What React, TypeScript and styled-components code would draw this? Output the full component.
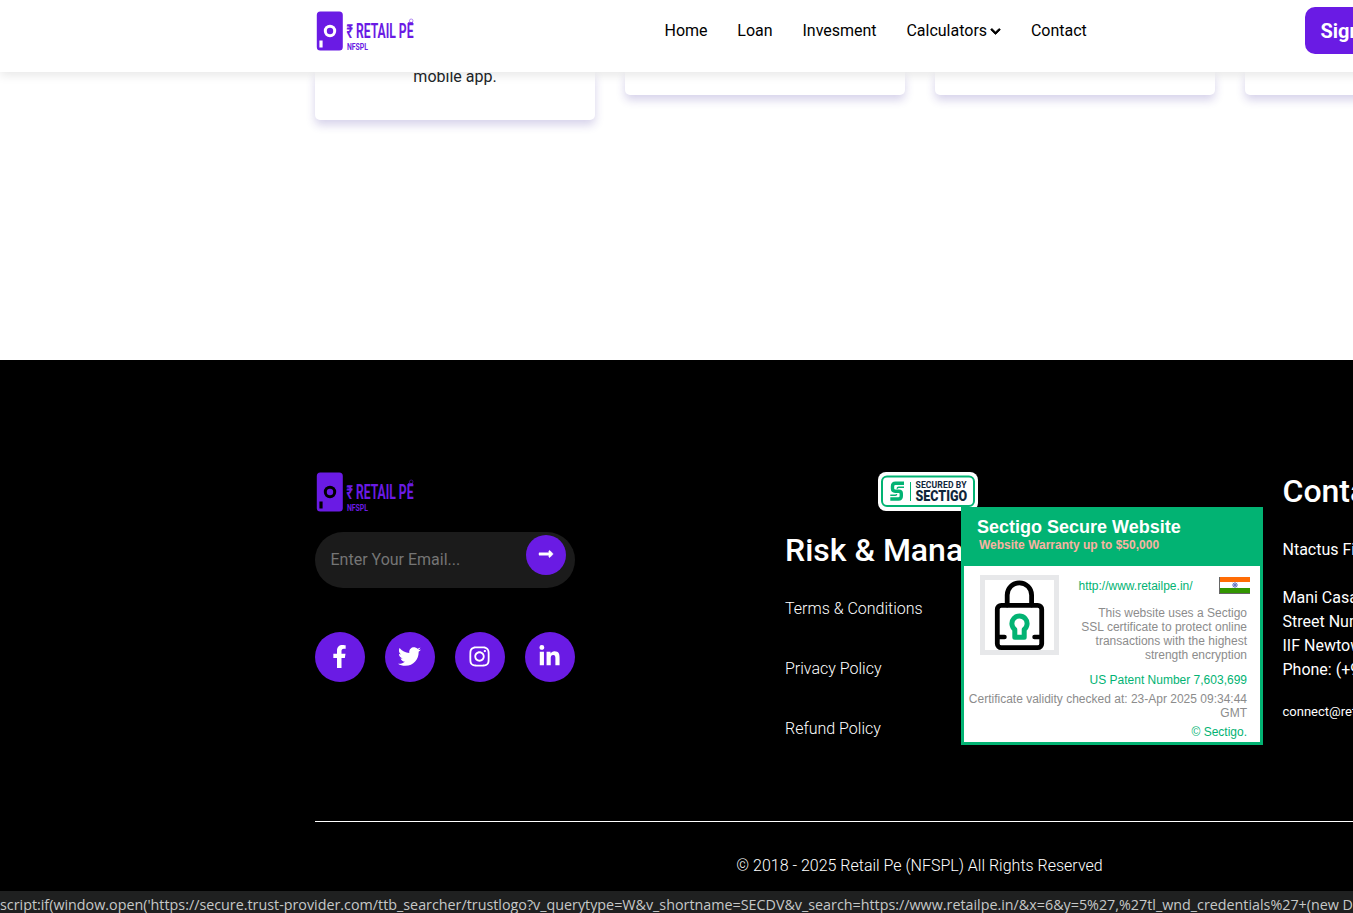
import React from "react";
import styled, { createGlobalStyle } from "styled-components";
import { FaFacebookF, FaTwitter, FaInstagram, FaLinkedinIn, FaChevronDown, FaLongArrowAltRight } from "react-icons/fa";

const purple = "#6a1be4";
const green = "#02b373";

const GlobalStyle = createGlobalStyle`
  * { box-sizing: border-box; }
  html, body { margin: 0; overflow: hidden; background: #fff; }
  body { font-family: Roboto, "Liberation Sans", sans-serif; font-size: 16px; line-height: 24px; color: #212529; }
  h3, p { margin: 0; }
  a { color: inherit; text-decoration: none; }
`;

const Viewport = styled.div`
  position: relative;
  width: 100%;
  height: 913px;
  overflow: hidden;
`;

const Page = styled.div`
  width: 1840px;
  display: flex;
  flex-direction: column;
`;

const Header = styled.header`
  position: relative;
  z-index: 2;
  height: 72px;
  padding: 0 315px;
  display: flex;
  align-items: flex-start;
  background: #fff;
  box-shadow: 0 3px 10px rgba(0, 0, 0, 0.1);
`;

const HeaderLogo = styled.a`
  flex: 0 0 349.5px;
  padding-top: 10px;
  line-height: 0;
`;

const Nav = styled.nav`
  flex: 0 0 640.5px;
  display: flex;
  gap: 29.8px;
  padding-top: 19px;
  color: #000;
`;

const NavLink = styled.a`
  display: flex;
  align-items: center;
  gap: 3px;
  white-space: nowrap;
  svg { width: 11px; height: 11px; stroke: currentColor; stroke-width: 40px; }
`;

const SignButton = styled.a`
  margin-top: 7px;
  height: 47px;
  padding: 1px 16px 0 15.5px;
  border-radius: 10px;
  background: ${purple};
  color: #fff;
  font-size: 20px;
  font-weight: 700;
  line-height: 47px;
  white-space: nowrap;
`;

const Cards = styled.section`
  height: 288px;
  padding: 0 315px;
  display: flex;
  align-items: flex-start;
  gap: 30px;
`;

const Card = styled.article<{ $height: number }>`
  flex: 0 0 280px;
  height: ${(p) => p.$height}px;
  border-radius: 0 0 5px 5px;
  background: #fff;
  box-shadow: 0 5px 10px rgba(50, 30, 150, 0.2);
  text-align: center;
  line-height: 24px;
  p { margin-top: -7px; }
`;

const Footer = styled.footer`
  height: 553px;
  padding: 111px 315px 0;
  background: #000;
  color: #fff;
  display: flex;
  flex-direction: column;
`;

const Columns = styled.div`
  height: 350px;
  display: flex;
`;

const BrandColumn = styled.div`
  flex: 0 0 470px;
  display: flex;
  flex-direction: column;
  align-items: flex-start;
`;

const EmailForm = styled.form`
  width: 260px;
  height: 56px;
  margin-top: 19px;
  padding: 3px 9px 0 15.5px;
  border-radius: 28px;
  background: #1b1b1b;
  display: flex;
  justify-content: space-between;
`;

const EmailInput = styled.input`
  width: 180px;
  height: 48px;
  padding: 0;
  border: 0;
  outline: 0;
  background: transparent;
  font: 16px/24px Roboto, sans-serif;
  color: #fff;
  &::placeholder { color: #757575; }
`;

const SendButton = styled.button`
  width: 40px;
  height: 40px;
  padding: 0 1px 2px 0;
  border: 0;
  border-radius: 50%;
  background: ${purple};
  color: #fff;
  display: flex;
  align-items: center;
  justify-content: center;
  svg { width: 16px; height: 16px; stroke: currentColor; stroke-width: 14px; }
`;

const Socials = styled.div`
  margin-top: 44px;
  display: flex;
  gap: 20px;
`;

const SocialLink = styled.a`
  width: 50px;
  height: 50px;
  padding: 0 1.5px 1px 0;
  border-radius: 50%;
  background: ${purple};
  color: #fff;
  display: flex;
  align-items: center;
  justify-content: center;
  svg { width: 23px; height: 23px; }
`;

const PolicyColumn = styled.div`
  flex: 0 0 497.5px;
  display: flex;
  flex-direction: column;
`;

const BadgeRow = styled.div`
  padding: 1px 0 0 93px;
  height: 60px;
  line-height: 0;
`;

const ColumnTitle = styled.h3`
  font-size: 32px;
  font-weight: 500;
  line-height: 38px;
  white-space: nowrap;
`;

const PolicyLinks = styled.div`
  padding-top: 28px;
  display: flex;
  flex-direction: column;
  gap: 36px;
  font-weight: 300;
`;

const ContactColumn = styled.address`
  padding-top: 1px;
  font-style: normal;
  white-space: nowrap;
`;

const Company = styled.p`
  padding-top: 27.5px;
`;

const AddressLines = styled.p`
  padding-top: 24px;
`;

const Email = styled.p`
  padding-top: 18px;
  font-size: 13px;
`;

const Copyright = styled.p`
  border-top: 1px solid #fff;
  padding: 32px 1px 0 0;
  text-align: center;
  font-weight: 300;
`;

const TrustPopup = styled.aside`
  position: absolute;
  z-index: 3;
  left: 961px;
  top: 507px;
  width: 302px;
  height: 238px;
  border: 3px solid ${green};
  border-top: 0;
  background: #fff;
  font: 12px/14px "Liberation Sans", Arial, sans-serif;
  color: #8c8c8c;
`;

const PopupHead = styled.div`
  height: 59px;
  padding: 10px 0 0 13px;
  background: ${green};
  color: #fff;
  white-space: nowrap;
`;

const PopupTitle = styled.div`
  font-size: 18px;
  font-weight: 700;
  line-height: 20px;
`;

const Warranty = styled.div`
  padding-left: 2px;
  font-weight: 700;
  line-height: 16px;
  color: #f9b2a2;
`;

const PopupBody = styled.div`
  display: flex;
  padding: 9px 13px 6px 16px;
`;

const LockFrame = styled.div`
  flex: 0 0 79px;
  height: 80px;
  line-height: 0;
`;

const PopupInfo = styled.div`
  flex: 1;
  display: flex;
  flex-direction: column;
`;

const SiteRow = styled.div`
  height: 31px;
  margin-right: -3px;
  padding: 2px 0 0 19.5px;
  display: flex;
  justify-content: space-between;
  align-items: flex-start;
  color: ${green};
  a { padding-top: 2px; }
`;

const InfoText = styled.p`
  text-align: right;
  white-space: nowrap;
`;

const PopupLine = styled.p<{ $accent?: boolean }>`
  padding: 5px 13px 0 0;
  text-align: right;
  white-space: nowrap;
  color: ${(p) => (p.$accent ? green : "inherit")};
`;

const StatusBar = styled.div`
  position: absolute;
  z-index: 4;
  left: 0;
  right: 0;
  bottom: 0;
  height: 22px;
  overflow: hidden;
  background: #1f2020;
  color: #c6c8c8;
  line-height: 0;
`;

const Logo = ({ hole }: { hole: string }) => (
  <svg width="100" height="42" viewBox="0 0 100 42" fontFamily="Roboto, sans-serif" fill={purple}>
    <rect x="1.8" y="1.500" width="26" height="39" rx="3.500" />
    <circle cx="15" cy="21" r="6.200" fill={hole} />
    <circle cx="15" cy="21" r="3.200" />
    <rect x="4.400" y="30.500" width="3.200" height="7" fill={hole} />
    <text x="31.500" y="28.300" fontSize="19.500" fontWeight="700" textLength="67" lengthAdjust="spacingAndGlyphs">₹ RETAIL PE</text>
    <path d="M93 12.800h5" stroke={purple} strokeWidth="1" />
    <circle cx="96.200" cy="10.800" r="1.800" fill="none" stroke={purple} strokeWidth=".5" />
    <text x="32" y="40.300" fontSize="9.400" fontWeight="700" textLength="21" lengthAdjust="spacingAndGlyphs">NFSPL</text>
  </svg>
);

const SectigoBadge = () => (
  <svg width="100" height="39" viewBox="0 0 100 39" fontFamily="Roboto, sans-serif" fontWeight="700">
    <rect width="100" height="39" rx="8" fill="#fff" />
    <rect x="4" y="4.500" width="92" height="29.500" rx="5" fill="none" stroke={green} strokeWidth="2" />
    <path d="M26 11.300h-8.500q-3 0-3 3v2.200q0 2.700 2.700 2.700h3.600q2.500 0 2.500 2.500v2.300q0 3-3 3H12.300" fill="none" stroke={green} strokeWidth="3.400" />
    <path d="M26 15.200h-5.300q-1.500 0-1.500 1.500M12.300 23.300h5q1.300 0 1.300-1.300" fill="none" stroke={green} strokeWidth="1.500" />
    <path d="M32.500 10v19" stroke={green} />
    <text x="37.500" y="15.800" fontSize="8.600" fill="#10263b" textLength="51" lengthAdjust="spacing">SECURED BY</text>
    <text x="37.500" y="29" fontSize="14.500" fontWeight="900" fill="#10263b" textLength="51.500" lengthAdjust="spacingAndGlyphs">SECTIGO</text>
  </svg>
);

const Lock = () => (
  <svg width="79" height="80" viewBox="0 0 79 80" fill="none" stroke="#000" strokeWidth="5" strokeLinecap="round">
    <rect x="2.500" y="2.500" width="74" height="75" stroke="#e7e8ea" />
    <path d="M27.200 30V20a12.200 12.200 0 0 1 24.400 0v10" strokeWidth="4.800" />
    <rect x="17.300" y="30.300" width="44.400" height="42.400" rx="4" strokeWidth="4.800" />
    <path d="M18 62h6.500M54.500 62H61" strokeWidth="4.500" />
    <path d="M34.800 62.300V54.500a7.600 7.600 0 1 1 9.400 0v7.800z" stroke={green} strokeLinejoin="round" />
  </svg>
);

const Flag = () => (
  <svg width="31" height="17" viewBox="0 0 31 17">
    <rect width="31" height="17" fill="#fff" />
    <rect width="31" height="5" fill="#ff6c05" />
    <rect y="11" width="31" height="5.500" fill="#329600" />
    <path d="M.5 0v17M0 16.500h31" stroke="#666" strokeWidth="1" />
    <circle cx="16" cy="8" r="2.600" fill="#c5cdf0" />
    <path d="M16 5v6M13 8h6M13.800 5.800l4.400 4.400M18.200 5.800l-4.400 4.400" stroke="#6676bd" strokeWidth=".9" />
  </svg>
);

const socialIcons = [FaFacebookF, FaTwitter, FaInstagram, FaLinkedinIn];

export default function App() {
  return (
    <Viewport>
      <GlobalStyle />
      <Page>
        <Header>
          <HeaderLogo href="#"><Logo hole="#fff" /></HeaderLogo>
          <Nav>
            <NavLink href="#">Home</NavLink>
            <NavLink href="#">Loan</NavLink>
            <NavLink href="#">Invesment</NavLink>
            <NavLink href="#">Calculators <FaChevronDown /></NavLink>
            <NavLink href="#">Contact</NavLink>
          </Nav>
          <SignButton href="#">Sign Up</SignButton>
        </Header>
        <Cards>
          <Card $height={48}><p>mobile app.</p></Card>
          <Card $height={23} />
          <Card $height={23} />
          <Card $height={23} />
        </Cards>
        <Footer>
          <Columns>
            <BrandColumn>
              <Logo hole="#000" />
              <EmailForm>
                <EmailInput placeholder="Enter Your Email..." />
                <SendButton type="button"><FaLongArrowAltRight /></SendButton>
              </EmailForm>
              <Socials>
                {socialIcons.map((Icon, i) => (
                  <SocialLink href="#" key={i}><Icon /></SocialLink>
                ))}
              </Socials>
            </BrandColumn>
            <PolicyColumn>
              <BadgeRow><SectigoBadge /></BadgeRow>
              <ColumnTitle>Risk &amp; Management</ColumnTitle>
              <PolicyLinks>
                <a href="#">Terms &amp; Conditions</a>
                <a href="#">Privacy Policy</a>
                <a href="#">Refund Policy</a>
              </PolicyLinks>
            </PolicyColumn>
            <ContactColumn>
              <ColumnTitle>Contact</ColumnTitle>
              <Company>Ntactus Financial</Company>
              <AddressLines>
                Mani Casadona<br />
                Street Number<br />
                IIF Newtown<br />
                Phone: (+91)
              </AddressLines>
              <Email>connect@retailpe.in</Email>
            </ContactColumn>
          </Columns>
          <Copyright>© 2018 - 2025 Retail Pe (NFSPL) All Rights Reserved</Copyright>
        </Footer>
      </Page>
      <TrustPopup>
        <PopupHead>
          <PopupTitle>Sectigo Secure Website</PopupTitle>
          <Warranty>Website Warranty up to $50,000</Warranty>
        </PopupHead>
        <PopupBody>
          <LockFrame><Lock /></LockFrame>
          <PopupInfo>
            <SiteRow><a href="#">http://www.retailpe.in/</a><Flag /></SiteRow>
            <InfoText>
              This website uses a Sectigo<br />
              SSL certificate to protect online<br />
              transactions with the highest<br />
              strength encryption
            </InfoText>
          </PopupInfo>
        </PopupBody>
        <PopupLine $accent>US Patent Number 7,603,699</PopupLine>
        <PopupLine>Certificate validity checked at: 23-Apr 2025 09:34:44<br />GMT</PopupLine>
        <PopupLine $accent>© Sectigo.</PopupLine>
      </TrustPopup>
      <StatusBar>
        <svg width="1353" height="22" fill="currentColor" fontFamily='"Open Sans", sans-serif' fontSize="15">
          <text x="0" y="19" textLength="1353" lengthAdjust="spacingAndGlyphs">{"script:if(window.open('https://secure.trust-provider.com/ttb_searcher/trustlogo?v_querytype=W&v_shortname=SECDV&v_search=https://www.retailpe.in/&x=6&y=5%27,%27tl_wnd_credentials%27+(new D"}</text>
        </svg>
      </StatusBar>
    </Viewport>
  );
}
